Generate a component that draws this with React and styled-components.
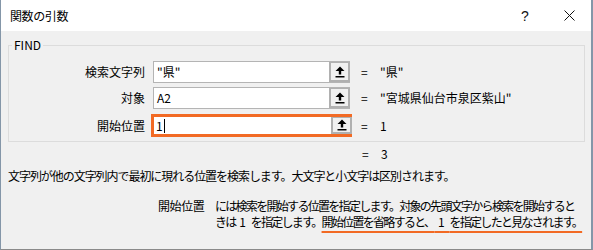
import styled, { createGlobalStyle } from "styled-components";

const GlobalStyle = createGlobalStyle`
  html, body {
    margin: 0;
    padding: 0;
    background: #ffffff;
  }
  body {
    font-family: "Noto Sans CJK JP", "Noto Sans", sans-serif;
    font-size: 12px;
    color: #000;
  }
`;

const Dialog = styled.div`
  box-sizing: border-box;
  width: 593px;
  height: 250px;
  display: flex;
  flex-direction: column;
  border-left: 1px solid #8496a8;
  border-right: 2px solid #8496a8;
  border-bottom: 1px solid #8a8a8a;
  background: #f0f0f0;
`;

const TitleBar = styled.div`
  height: 31px;
  flex-shrink: 0;
  display: flex;
  align-items: center;
  background: #ffffff;
  padding-left: 9px;
`;

const Title = styled.div`
  flex: 1;
  font-size: 12px;
  letter-spacing: -0.4px;
  line-height: 16px;
`;

const TitleButton = styled.div`
  width: 44px;
  height: 31px;
  display: flex;
  align-items: center;
  justify-content: center;
  font-size: 14px;
  font-family: "Liberation Sans", sans-serif;
  color: #111;
`;

const Body = styled.div`
  flex: 1;
  padding: 6px 6px 0 7px;
  display: flex;
  flex-direction: column;
`;

const Group = styled.fieldset`
  margin: 0;
  padding: 8px 0 4px 0;
  border: 1px solid #dcdcdc;
  display: flex;
  flex-direction: column;
  gap: 4px;
`;

const Legend = styled.legend`
  margin-left: 3px;
  padding: 0 2px;
  line-height: 16px;
  font-size: 12px;
`;

const Row = styled.div`
  display: flex;
  align-items: center;
  height: ${(p) => (p.$active ? "23px" : "22px")};
  margin-top: ${(p) => (p.$active ? "1px" : "0")};
`;

const Label = styled.div`
  width: 136px;
  text-align: right;
  margin-right: 8px;
  line-height: 16px;
`;

const Field = styled.div`
  box-sizing: border-box;
  width: ${(p) => (p.$active ? "201px" : "197px")};
  height: ${(p) => (p.$active ? "23px" : "22px")};
  margin: ${(p) => (p.$active ? "0 -2px" : "0")};
  display: flex;
  border: ${(p) => (p.$active ? "3px solid #f26a24" : "1px solid #b4b4b4")};
  border-right: none;
  background: #fff;
`;

const FieldText = styled.div`
  flex: 1;
  display: flex;
  align-items: center;
  padding-left: ${(p) => (p.$active ? "2px" : "3px")};
  line-height: 16px;
`;

const Caret = styled.span`
  display: inline-block;
  width: 1px;
  height: 14px;
  background: #000;
  margin-left: 1px;
`;

const RefButton = styled.div`
  box-sizing: border-box;
  width: 21px;
  height: 100%;
  display: flex;
  align-items: center;
  justify-content: center;
  background: #f0f0f0;
  border: 2px solid #b0b0b0;
  border-top-width: 1px;
`;

const Eq = styled.div`
  margin-left: ${(p) => (p.$flush ? "0" : "11px")};
  width: 8px;
  line-height: 16px;
`;

const Value = styled.div`
  margin-left: 11px;
  line-height: 16px;
`;

const ResultRow = styled.div`
  display: flex;
  align-items: center;
  height: 16px;
  margin-top: 4px;
  padding-left: 354px;
`;

const Description = styled.div`
  margin-top: 6px;
  line-height: 16px;
  letter-spacing: -1.05px;
`;

const Help = styled.div`
  margin-top: 14px;
  display: flex;
  padding-left: 150px;
  line-height: 16px;
`;

const HelpName = styled.div`
  width: 57px;
  letter-spacing: -0.4px;
`;

const HelpText = styled.div`
  letter-spacing: -1.7px;
  white-space: nowrap;
`;

const Num = styled.span`
  letter-spacing: 1px;
`;

const Marked = styled.span`
  text-decoration: underline;
  text-decoration-color: #f26a24;
  text-decoration-thickness: 2px;
  text-underline-offset: 4px;
`;

const UpArrow = () => (
  <svg width="10" height="12" viewBox="0 0 10 12">
    <path d="M5 0.5 L9.5 5 L6.2 5 L6.2 8.5 L3.8 8.5 L3.8 5 L0.5 5 Z" fill="#000" />
    <rect x="0.5" y="10" width="9" height="1.5" fill="#000" />
  </svg>
);

const CloseIcon = () => (
  <svg width="11" height="11" viewBox="0 0 11 11">
    <path d="M0.5 0.5 L10.5 10.5 M10.5 0.5 L0.5 10.5" stroke="#111" strokeWidth="1" />
  </svg>
);

const args = [
  { label: "検索文字列", text: '"県"', value: '"県"' },
  { label: "対象", text: "A2", value: '"宮城県仙台市泉区紫山"' },
  { label: "開始位置", text: "1", value: "1", active: true },
];

const one = "\u00a01\u00a0";

export default function App() {
  return (
    <>
      <GlobalStyle />
      <Dialog>
        <TitleBar>
          <Title>関数の引数</Title>
          <TitleButton>?</TitleButton>
          <TitleButton>
            <CloseIcon />
          </TitleButton>
        </TitleBar>
        <Body>
          <Group>
            <Legend>FIND</Legend>
            {args.map((a) => (
              <Row key={a.label} $active={a.active}>
                <Label>{a.label}</Label>
                <Field $active={a.active}>
                  <FieldText $active={a.active}>
                    {a.text}
                    {a.active && <Caret />}
                  </FieldText>
                  <RefButton>
                    <UpArrow />
                  </RefButton>
                </Field>
                <Eq>=</Eq>
                <Value>{a.value}</Value>
              </Row>
            ))}
          </Group>
          <ResultRow>
            <Eq $flush>=</Eq>
            <Value>3</Value>
          </ResultRow>
          <Description>
            文字列が他の文字列内で最初に現れる位置を検索します。大文字と小文字は区別されます。
          </Description>
          <Help>
            <HelpName>開始位置</HelpName>
            <HelpText>
              には検索を開始する位置を指定します。対象の先頭文字から検索を開始すると
              <br />
              きは<Num>{one}</Num>を指定します。
              <Marked>
                開始位置を省略すると、<Num>{one}</Num>を指定したと見なされます。
              </Marked>
            </HelpText>
          </Help>
        </Body>
      </Dialog>
    </>
  );
}
